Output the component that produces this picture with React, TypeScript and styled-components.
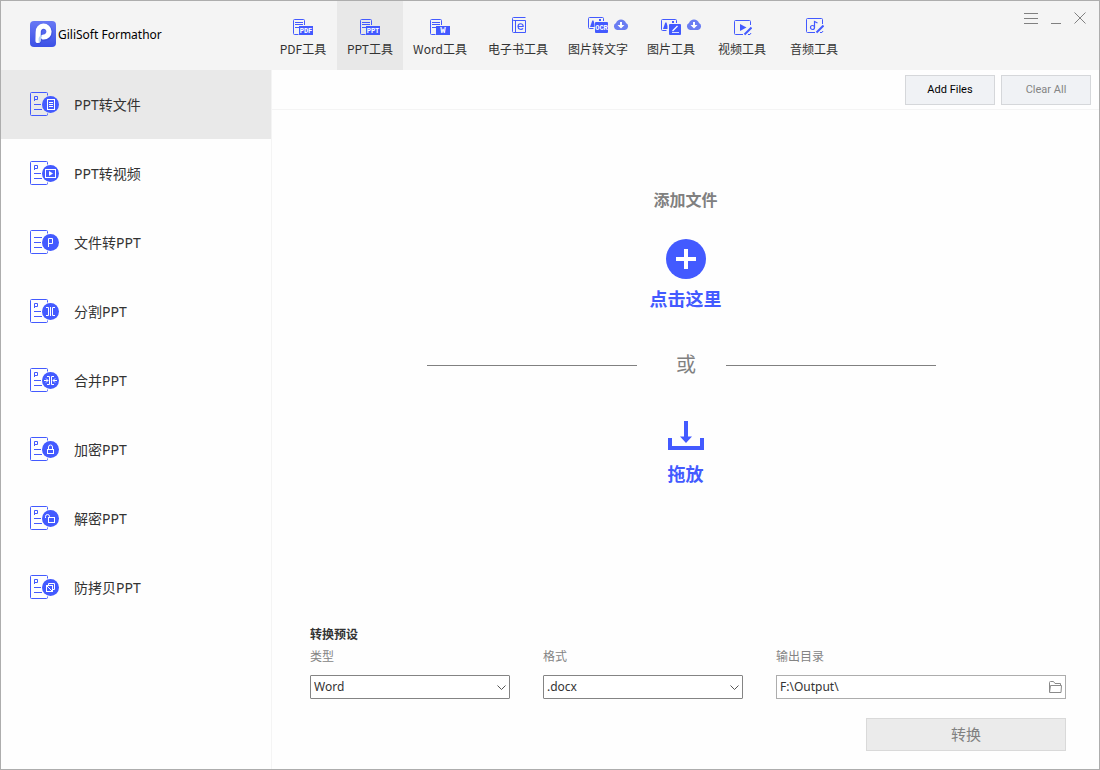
import React from 'react';
import styled, { createGlobalStyle } from 'styled-components';

const BLUE = '#435aff';
const UI_FONT = '"Noto Sans", "Noto Sans CJK SC", sans-serif';

const GlobalStyle = createGlobalStyle`
  *, *::before, *::after { box-sizing: border-box; }
  body {
    margin: 0;
    font-family: ${UI_FONT};
    font-size: 12px;
    color: #333;
  }
  button, input, select { font: inherit; color: inherit; }
  svg { display: block; }
`;

const Window = styled.div`
  display: flex;
  flex-direction: column;
  min-height: 100vh;
  border: 1px solid #adadad;
  background: #fefefe;
`;

const Header = styled.header`
  display: flex;
  flex: none;
  height: 69px;
  background: #f4f4f4;
`;

const Brand = styled.div`
  display: flex;
  align-items: center;
  gap: 2px;
  flex: none;
  width: 268px;
  padding: 0 0 3px 29px;
  font-size: 12px;
  color: #000;
`;

const Tabs = styled.nav`
  display: flex;
`;

const Tab = styled.button<{ $width: number; $active?: boolean }>`
  display: flex;
  flex-direction: column;
  align-items: center;
  gap: 5px;
  width: ${(p) => p.$width}px;
  padding: 15px 0 0;
  border: 0;
  background: ${(p) => (p.$active ? '#e8e8e8' : 'transparent')};
  font-family: "Noto Sans CJK SC", sans-serif;
  font-size: 12px;
  line-height: 16px;
  white-space: nowrap;
  color: #333;
`;

const TabIcon = styled.span`
  position: relative;
`;

const CloudBadge = styled.span`
  position: absolute;
  top: 3px;
  left: 25px;
`;

const WindowControls = styled.div`
  display: flex;
  align-items: flex-start;
  gap: 9px;
  margin-left: auto;
  padding: 8px 11px 0 0;
`;

const ControlButton = styled.button`
  padding: 0 2px;
  border: 0;
  background: none;
`;

const Body = styled.div`
  display: flex;
  flex: 1;
`;

const Sidebar = styled.aside`
  flex: none;
  width: 271px;
  border-right: 1px solid #f4f4f4;
`;

const SideItem = styled.button<{ $active?: boolean }>`
  display: flex;
  align-items: center;
  gap: 14px;
  width: 100%;
  height: 69px;
  padding: 0 29px;
  border: 0;
  background: ${(p) => (p.$active ? '#e9e9e9' : 'transparent')};
  font-size: 14px;
  line-height: 20px;
  color: #333;
`;

const Main = styled.main`
  display: flex;
  flex: 1;
  flex-direction: column;
  min-width: 0;
`;

const Toolbar = styled.div`
  display: flex;
  justify-content: flex-end;
  gap: 6px;
  padding: 5px 8px 4px;
  border-bottom: 1px solid #f4f4f4;
`;

const ToolButton = styled.button`
  width: 90px;
  height: 30px;
  padding: 0 0 2px;
  border: 1px solid #d5d7da;
  background: #f0f2f5;
  font-family: Roboto, ${UI_FONT};
  font-size: 11px;
  color: #000;

  &:disabled { color: #848484; }
`;

const DropArea = styled.section`
  display: flex;
  flex: 1;
  flex-direction: column;
  align-items: center;
  padding-top: 78px;
`;

const DropTitle = styled.h2`
  margin: 0 0 27px;
  font-size: 16px;
  font-weight: 700;
  line-height: 24px;
  color: #808080;
`;

const AddButton = styled.button`
  display: flex;
  flex-direction: column;
  align-items: center;
  gap: 8px;
  padding: 0;
  border: 0;
  background: none;
  font-size: 18px;
  font-weight: 700;
  line-height: 24px;
  color: ${BLUE};
`;

const Divider = styled.div`
  display: flex;
  align-items: center;
  justify-content: center;
  width: 100%;
  margin: 39px 0 41px;
  padding-right: 8px;
  font-size: 20px;
  line-height: 30px;
  color: #808080;
`;

const Rule = styled.span`
  width: 210px;
  height: 1px;
  background: #808080;
`;

const DividerWord = styled.span`
  padding: 0 30px 0 39px;
`;

const DropHint = styled.div`
  display: flex;
  flex-direction: column;
  align-items: center;
  gap: 12px;
  font-size: 18px;
  font-weight: 700;
  line-height: 24px;
  color: ${BLUE};
`;

const Preset = styled.form`
  padding: 0 33px 18px 38px;
`;

const PresetTitle = styled.h3`
  margin: 0 0 6px;
  font-size: 12px;
  font-weight: 700;
  line-height: 16px;
`;

const Fields = styled.div`
  display: grid;
  grid-template-columns: 200px 200px minmax(200px, 1fr);
  gap: 33px;
`;

const Field = styled.div`
  display: flex;
  flex-direction: column;
  gap: 10px;
`;

const FieldLabel = styled.label`
  line-height: 16px;
  color: #848484;
`;

const Control = styled.div`
  position: relative;
`;

const Select = styled.select`
  display: block;
  appearance: none;
  width: 100%;
  height: 24px;
  padding: 0 20px 1px 3px;
  border: 1px solid #848484;
  border-radius: 1px;
  background: #fff;
`;

const PathInput = styled.input`
  display: block;
  width: 100%;
  height: 24px;
  padding: 0 24px 1px 3px;
  border: 1px solid #adadad;
  background: #fff;
`;

const Chevron = styled.svg`
  position: absolute;
  top: 10px;
  right: 4px;
  pointer-events: none;
`;

const BrowseButton = styled.button`
  position: absolute;
  top: 6px;
  right: 4px;
  padding: 0;
  border: 0;
  background: none;
`;

const Actions = styled.div`
  display: flex;
  justify-content: flex-end;
  margin-top: 19px;
`;

const ConvertButton = styled.button`
  width: 200px;
  height: 33px;
  padding: 0 0 2px;
  border: 1px solid #d9d9d9;
  background: #ebebeb;
  font-size: 15px;
  color: #808080;
`;

const TagText = styled.text`
  font-family: "Liberation Mono", monospace;
  font-weight: 700;
  fill: #fff;
`;

function Logo() {
  return (
    <svg width="26" height="26" viewBox="0 0 26 26" aria-hidden="true">
      <defs>
        <linearGradient id="logo-bg" x1="0" y1="0" x2="0" y2="1">
          <stop offset="0" stopColor="#6878f4" />
          <stop offset="1" stopColor="#3b50e6" />
        </linearGradient>
      </defs>
      <rect width="26" height="26" rx="4" fill="url(#logo-bg)" />
      <path
        d="M8.500 20V12A5.600 5.600 0 1 1 14.400 17"
        fill="none"
        stroke="#2f43cf"
        strokeWidth="6.500"
        strokeLinecap="round"
        opacity=".4"
      />
      <path
        d="M8 19.500 8.200 11A5.400 5.400 0 1 1 13.600 16"
        fill="none"
        stroke="#fff"
        strokeWidth="5.200"
        strokeLinecap="round"
      />
      <path d="M9.600 20V17.500a4 4 0 0 1 1.600-2.300" fill="none" stroke="#b9d3f6" strokeWidth="2" strokeLinecap="round" />
    </svg>
  );
}

function DocTabIcon({ tag }: { tag: string }) {
  return (
    <svg width="20" height="20" viewBox="0 0 20 20" aria-hidden="true">
      <path d="M5.5 18.5h-4a1 1 0 0 1-1-1v-13a1 1 0 0 1 1-1h9a1 1 0 0 1 1 1V9" fill="none" stroke={BLUE} />
      <path d="M2 6.5h8M2 8.5h8M2 11.5h4" stroke={BLUE} />
      <rect x="6" y="10" width="14" height="9" fill={BLUE} />
      <TagText x="13" y="17" fontSize={tag.length > 1 ? 7 : 9} textAnchor="middle">
        {tag}
      </TagText>
    </svg>
  );
}

function BookIcon() {
  return (
    <svg width="20" height="20" viewBox="0 0 20 20" fill="none" stroke={BLUE} aria-hidden="true">
      <path d="M17.5 1.5h-12a1 1 0 0 0-1 1v13a1 1 0 0 0 1 1h12v-12h-12q-1 0-1-1.500M7.500 4.500v12" />
      <path d="M10 10.500h5.200c0-3.700-5.200-3.700-5.200 0 0 3.200 3.800 3.500 5 1.800" strokeWidth="1.200" />
    </svg>
  );
}

function PictureBase({ y }: { y: number }) {
  return (
    <g transform={`translate(0 ${y})`}>
      <path d="M5.500 11.500h-4a1 1 0 0 1-1-1v-9a1 1 0 0 1 1-1h13a1 1 0 0 1 1 1V4" fill="none" stroke={BLUE} />
      <path d="M2 10 4.300 3.500h1.200L6.500 7v3z" fill={BLUE} />
      <rect x="11" y="2" width="2" height="2" fill={BLUE} />
    </g>
  );
}

function OcrIcon() {
  return (
    <svg width="20" height="20" viewBox="0 0 20 20" aria-hidden="true">
      <PictureBase y={1} />
      <rect x="7" y="6" width="13" height="11" rx="1" fill={BLUE} />
      <TagText x="13.5" y="14" fontSize="7" textAnchor="middle">
        OCR
      </TagText>
    </svg>
  );
}

function PictureIcon() {
  return (
    <svg width="20" height="20" viewBox="0 0 20 20" aria-hidden="true">
      <PictureBase y={3} />
      <rect x="8" y="8" width="12" height="11" rx="1" fill={BLUE} />
      <path d="m11.500 15 5-5" stroke="#fff" strokeWidth="1.300" />
      <path d="M11 16.500h7" stroke="#fff" opacity=".8" />
    </svg>
  );
}

function CloudIcon() {
  return (
    <svg width="16" height="12" viewBox="0 0 16 12" aria-hidden="true">
      <path d="M4 11A3.700 3.700 0 0 1 3 4C3.800 1.800 5.700.500 8 .500s4.200 1.300 5 3.500A3.700 3.700 0 0 1 12 11z" fill="#6a7df2" />
      <path d="M7 3h2v3h2.500L8 9.500 4.500 6H7z" fill="#fff" />
    </svg>
  );
}

function VideoIcon() {
  return (
    <svg width="20" height="20" viewBox="0 0 20 20" aria-hidden="true">
      <path d="M18.500 9V5.500a1 1 0 0 0-1-1h-14a1 1 0 0 0-1 1v12a1 1 0 0 0 1 1H11" fill="none" stroke={BLUE} />
      <path d="M8 8v7l6.500-3.500z" fill={BLUE} />
      <path d="m12.500 18.500 7-7" stroke={BLUE} strokeWidth="2" />
      <path d="M16 18.500h2l1-1.500" fill="none" stroke={BLUE} />
    </svg>
  );
}

function AudioIcon() {
  return (
    <svg width="20" height="20" viewBox="0 0 20 20" aria-hidden="true">
      <path d="M18.500 8V3.500a1 1 0 0 0-1-1h-14a1 1 0 0 0-1 1v12a1 1 0 0 0 1 1H11" fill="none" stroke={BLUE} />
      <circle cx="8.500" cy="11.500" r="2" fill="none" stroke={BLUE} strokeWidth="1.200" />
      <path d="M10.500 11.500v-6l3 1.500" fill="none" stroke={BLUE} strokeWidth="1.200" />
      <path d="m12.500 16.500 7-7" stroke={BLUE} strokeWidth="2" />
      <path d="M16 16.500h2l1-1.500" fill="none" stroke={BLUE} />
    </svg>
  );
}

const badges: Record<string, React.ReactNode> = {
  file: (
    <>
      <rect x="17.500" y="7.500" width="7" height="10" />
      <path d="M19 10.500h4M19 12.500h4M19 14.500h4" />
    </>
  ),
  video: (
    <>
      <rect x="15.500" y="8.500" width="10" height="8" />
      <path d="M19 10v5l4-2.500z" fill="#fff" stroke="none" />
    </>
  ),
  letter: <path d="M18.500 17V8.500h4v5h-4" />,
  split: <path d="M16 8.500h2.500v8H16M20.500 8v9M25 8.500h-2.500v8H25" />,
  merge: <path d="M17 8.500h2.500v8H17M24 8.500h-2.500v8H24M14 12.500h4M16 10.500l2 2-2 2M27 12.500h-4M25 10.500l-2 2 2 2" />,
  lock: (
    <>
      <rect x="17.500" y="12.500" width="6" height="4" />
      <path d="M18.500 12v-2a2 2 0 0 1 4 0v2" />
    </>
  ),
  unlock: (
    <>
      <rect x="18.500" y="11.500" width="6" height="5" />
      <path d="M15.500 12v-1.500a2 2 0 0 1 4 0v1" />
    </>
  ),
  protect: (
    <>
      <path d="M18.500 10V8.500h6v6H23" />
      <rect x="16.500" y="10.500" width="6" height="6" />
      <path d="m16.500 10.500 6 6" />
    </>
  ),
};

function SideIcon({ badge }: { badge: string }) {
  const isLetter = badge === 'letter';
  return (
    <svg width="30" height="25" viewBox="0 0 30 25" fill="none" stroke={BLUE} aria-hidden="true">
      <path d="M17.500 3.500v-2a1 1 0 0 0-1-1h-15a1 1 0 0 0-1 1v21a1 1 0 0 0 1 1h15a1 1 0 0 0 1-1v-1" />
      {isLetter ? <path d="M4 7.500h8M4 12.500h7M4 17.500h8" /> : <path d="M4.500 9V4.500h3v3h-3M4 12.500h7M4 17.500h8" />}
      <circle cx="20.500" cy="12.500" r="8.500" fill={BLUE} stroke="none" />
      <g stroke="#fff">{badges[badge]}</g>
    </svg>
  );
}

function PlusIcon() {
  return (
    <svg width="40" height="40" viewBox="0 0 40 40" aria-hidden="true">
      <circle cx="20" cy="20" r="20" fill={BLUE} />
      <path d="M20 10v20M10 20h20" stroke="#fff" strokeWidth="4" />
    </svg>
  );
}

function DropIcon() {
  return (
    <svg width="36" height="29" viewBox="0 0 36 29" aria-hidden="true">
      <path d="M2 17v10h32V17" fill="none" stroke={BLUE} strokeWidth="4" />
      <path d="M16 0h4v15.500h4L18 22l-6-6.500h4z" fill={BLUE} />
    </svg>
  );
}

function FolderIcon() {
  return (
    <svg width="13" height="12" viewBox="0 0 13 12" fill="none" stroke="#8a8a8a" aria-hidden="true">
      <path d="M.500 11V1.500a1 1 0 0 1 1-1h3l1.500 2h5.500V5" />
      <path d="M.500 11.500 1.500 4.500h11l-.500 7z" />
    </svg>
  );
}

const tabs = [
  { label: 'PDF工具', width: 68, icon: <DocTabIcon tag="PDF" /> },
  { label: 'PPT工具', width: 66, icon: <DocTabIcon tag="PPT" />, active: true },
  { label: 'Word工具', width: 74, icon: <DocTabIcon tag="W" /> },
  { label: '电子书工具', width: 82, icon: <BookIcon /> },
  { label: '图片转文字', width: 78, icon: <OcrIcon />, cloud: true },
  { label: '图片工具', width: 68, icon: <PictureIcon />, cloud: true },
  { label: '视频工具', width: 74, icon: <VideoIcon /> },
  { label: '音频工具', width: 70, icon: <AudioIcon /> },
];

const sideItems = [
  { label: 'PPT转文件', badge: 'file' },
  { label: 'PPT转视频', badge: 'video' },
  { label: '文件转PPT', badge: 'letter' },
  { label: '分割PPT', badge: 'split' },
  { label: '合并PPT', badge: 'merge' },
  { label: '加密PPT', badge: 'lock' },
  { label: '解密PPT', badge: 'unlock' },
  { label: '防拷贝PPT', badge: 'protect' },
];

function SelectField({ id, label, options }: { id: string; label: string; options: string[] }) {
  return (
    <Field>
      <FieldLabel htmlFor={id}>{label}</FieldLabel>
      <Control>
        <Select id={id} defaultValue={options[0]}>
          {options.map((o) => (
            <option key={o}>{o}</option>
          ))}
        </Select>
        <Chevron width="9" height="6" viewBox="0 0 9 6" fill="none" stroke="#555">
          <path d="M.500.500 4.500 4.500 8.500.500" />
        </Chevron>
      </Control>
    </Field>
  );
}

export default function App() {
  return (
    <>
      <GlobalStyle />
      <Window>
        <Header>
          <Brand>
            <Logo />
            <span>GiliSoft Formathor</span>
          </Brand>
          <Tabs>
            {tabs.map((t) => (
              <Tab key={t.label} type="button" $width={t.width} $active={t.active}>
                <TabIcon>
                  {t.icon}
                  {t.cloud && (
                    <CloudBadge>
                      <CloudIcon />
                    </CloudBadge>
                  )}
                </TabIcon>
                <span>{t.label}</span>
              </Tab>
            ))}
          </Tabs>
          <WindowControls>
            <ControlButton type="button" aria-label="Menu">
              <svg width="14" height="18" viewBox="0 0 14 18" stroke="#808080">
                <path d="M0 4.500h14M0 9.500h14M0 14.500h14" />
              </svg>
            </ControlButton>
            <ControlButton type="button" aria-label="Minimize">
              <svg width="10" height="18" viewBox="0 0 10 18" stroke="#808080">
                <path d="M0 14.500h10" />
              </svg>
            </ControlButton>
            <ControlButton type="button" aria-label="Close">
              <svg width="12" height="18" viewBox="0 0 12 18" stroke="#808080">
                <path d="m.500 3.500 11 11M11.500 3.500l-11 11" />
              </svg>
            </ControlButton>
          </WindowControls>
        </Header>

        <Body>
          <Sidebar>
            {sideItems.map((item, i) => (
              <SideItem key={item.label} type="button" $active={i === 0}>
                <SideIcon badge={item.badge} />
                <span>{item.label}</span>
              </SideItem>
            ))}
          </Sidebar>

          <Main>
            <Toolbar>
              <ToolButton type="button">Add Files</ToolButton>
              <ToolButton type="button" disabled>
                Clear All
              </ToolButton>
            </Toolbar>

            <DropArea>
              <DropTitle>添加文件</DropTitle>
              <AddButton type="button">
                <PlusIcon />
                <span>点击这里</span>
              </AddButton>
              <Divider>
                <Rule />
                <DividerWord>或</DividerWord>
                <Rule />
              </Divider>
              <DropHint>
                <DropIcon />
                <span>拖放</span>
              </DropHint>
            </DropArea>

            <Preset>
              <PresetTitle>转换预设</PresetTitle>
              <Fields>
                <SelectField id="type" label="类型" options={['Word']} />
                <SelectField id="format" label="格式" options={['.docx']} />
                <Field>
                  <FieldLabel htmlFor="output">输出目录</FieldLabel>
                  <Control>
                    <PathInput id="output" type="text" defaultValue="F:\Output\" />
                    <BrowseButton type="button" aria-label="Browse">
                      <FolderIcon />
                    </BrowseButton>
                  </Control>
                </Field>
              </Fields>
              <Actions>
                <ConvertButton type="button" disabled>
                  转换
                </ConvertButton>
              </Actions>
            </Preset>
          </Main>
        </Body>
      </Window>
    </>
  );
}
